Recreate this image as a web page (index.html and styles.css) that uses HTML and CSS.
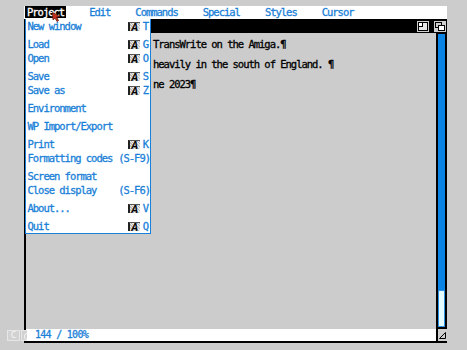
FILE: index.html
```html
<!DOCTYPE html>
<html>
<head>
<meta charset="utf-8">
<link rel="stylesheet" href="styles.css">
</head>
<body>
<div class="screen">
  <div class="menubar">
    <span class="mtitle active">Project</span>
    <span class="mtitle">Edit</span>
    <span class="mtitle">Commands</span>
    <span class="mtitle">Special</span>
    <span class="mtitle">Styles</span>
    <span class="mtitle">Cursor</span>
  </div>
  <div class="window">
    <div class="titlebar">
      <span class="gadget">
        <svg width="12" height="11" viewBox="0 0 12 11"><rect x="0" y="0" width="12" height="11" fill="#cfcfcf"/><rect x="1.5" y="1.5" width="9" height="8" fill="#e8e8e8" stroke="#000"/><rect x="1.5" y="1.5" width="4" height="4" fill="#fff" stroke="#000"/></svg>
      </span>
      <span class="gadget">
        <svg width="12" height="11" viewBox="0 0 12 11"><rect x="0" y="0" width="12" height="11" fill="#cfcfcf"/><rect x="1.5" y="1.5" width="6" height="5" fill="none" stroke="#000"/><rect x="4.5" y="4.5" width="6" height="5" fill="#fff" stroke="#000"/></svg>
      </span>
    </div>
    <div class="body">
      <div class="doc">
        <p>TransWrite on the Amiga.¶</p>
        <p>heavily in the south of England. ¶</p>
        <p>ne 2023¶</p>
      </div>
      <div class="scroll">
        <div class="track"></div>
        <div class="knob"></div>
      </div>
    </div>
    <div class="status">
      <div class="info">144 / 100%</div>
      <div class="sizer">
        <svg width="9" height="10" viewBox="0 0 9 10"><path d="M1.5 8.5 L7.5 2.5 L7.5 8.5 Z" fill="none" stroke="#000"/></svg>
      </div>
    </div>
  </div>
  <div class="cbox c1">C</div>
  <div class="cbox c2"><span class="arc"></span></div>
  <div class="menu">
    <div class="group">
      <div class="item"><span class="label">New window</span><span class="key ak"><span class="akey">A</span>T</span></div>
    </div>
    <div class="group">
      <div class="item"><span class="label">Load</span><span class="key ak"><span class="akey">A</span>G</span></div>
      <div class="item"><span class="label">Open</span><span class="key ak"><span class="akey">A</span>O</span></div>
    </div>
    <div class="group">
      <div class="item"><span class="label">Save</span><span class="key ak"><span class="akey">A</span>S</span></div>
      <div class="item"><span class="label">Save as</span><span class="key ak"><span class="akey">A</span>Z</span></div>
    </div>
    <div class="group">
      <div class="item"><span class="label">Environment</span></div>
    </div>
    <div class="group">
      <div class="item"><span class="label">WP Import/Export</span></div>
    </div>
    <div class="group">
      <div class="item"><span class="label">Print</span><span class="key ak"><span class="akey">A</span>K</span></div>
      <div class="item"><span class="label">Formatting codes</span><span class="key">(S-F9)</span></div>
    </div>
    <div class="group">
      <div class="item"><span class="label">Screen format</span></div>
      <div class="item"><span class="label">Close display</span><span class="key">(S-F6)</span></div>
    </div>
    <div class="group">
      <div class="item"><span class="label">About...</span><span class="key ak"><span class="akey">A</span>V</span></div>
    </div>
    <div class="group">
      <div class="item"><span class="label">Quit</span><span class="key ak"><span class="akey">A</span>Q</span></div>
    </div>
  </div>
  <svg class="pointer" width="9" height="10" viewBox="0 0 9 10"><path d="M0.5 0.5 L7.5 4.5 L4.5 5 L6.5 8.5 L5 9.5 L3 6 L1 8 Z" fill="#c8301c" stroke="#6a1a10" stroke-width="0.8"/></svg>
</div>
</body>
</html>
```
FILE: styles.css
```css
html, body {
  margin: 0;
  padding: 0;
  background: #cccccc;
}
.screen {
  position: relative;
  width: 467px;
  height: 350px;
  overflow: hidden;
  padding-top: 6px;
  box-sizing: border-box;
  font-family: "DejaVu Sans Mono", monospace;
  font-weight: normal;
  -webkit-text-stroke: 0.3px currentColor;
  font-size: 10.5px;
  letter-spacing: -1.02px;
}
.menubar {
  margin-left: 24px;
  width: 423px;
  height: 13px;
  background: #ffffff;
  display: flex;
  line-height: 13px;
  color: #1a7fd8;
}
.mtitle {
  padding: 0 2px;
  margin-right: 21px;
  white-space: pre;
}
.mtitle.active {
  margin-left: 1px;
  background: #000;
  color: #fff;
  height: 12px;
}
.window {
  margin-left: 24px;
  width: 423px;
  height: 324px;
  box-sizing: border-box;
  border-left: 2px solid #000;
  border-bottom: 2px solid #000;
  display: flex;
  flex-direction: column;
  background: #cccccc;
}
.titlebar {
  height: 14px;
  background: #000;
  display: flex;
  justify-content: flex-end;
  align-items: flex-start;
  padding-top: 2px;
  box-sizing: border-box;
  padding-right: 1px;
  gap: 5px;
}
.gadget {
  display: block;
  width: 12px;
  height: 11px;
}
.gadget svg, .sizer svg {
  display: block;
}
.body {
  flex: 1;
  display: flex;
  min-height: 0;
}
.doc {
  flex: 1;
  padding-top: 1px;
  padding-left: 127px;
  color: #000;
  overflow: hidden;
}
.doc p {
  margin: 0;
  line-height: 20px;
  white-space: pre;
}
.scroll {
  width: 11px;
  box-sizing: border-box;
  border-left: 2px solid #000;
  border-right: 2px solid #000;
  border-bottom: 2px solid #000;
  border-top: 1px solid #000;
  display: flex;
  flex-direction: column;
}
.track {
  flex: 1;
  background: #0a84e4;
}
.knob {
  height: 37px;
  box-sizing: border-box;
  border: 1px solid #2c92e6;
  background: #e4fbff;
}
.status {
  height: 12px;
  display: flex;
}
.info {
  flex: 1;
  background: #fff;
  color: #1a7fd8;
  font-size: 10px;
  letter-spacing: -0.72px;
  line-height: 12px;
  padding-left: 9px;
  white-space: pre;
}
.sizer {
  width: 11px;
  box-sizing: border-box;
  border-left: 2px solid #000;
  background: #cfcfcf;
  padding-top: 1px;
}
.cbox {
  position: absolute;
  top: 330px;
  height: 11px;
  box-sizing: border-box;
  border: 1px solid #e6e6e6;
  background: #d2d2d2;
  color: #f6f6f6;
  font-weight: normal;
  -webkit-text-stroke: 0;
  font-size: 9px;
  line-height: 9px;
  letter-spacing: 0;
  text-align: center;
  overflow: hidden;
}
.c1 {
  left: 7px;
  width: 13px;
}
.c2 {
  left: 21px;
  width: 6px;
  border-right: none;
  padding: 2px 0 0 2px;
}
.arc {
  display: block;
  width: 6px;
  height: 5px;
  border: 1px solid #f2f2f2;
  border-radius: 3px;
}
.menu {
  position: absolute;
  left: 25px;
  top: 19px;
  width: 126px;
  box-sizing: border-box;
  background: #fff;
  border: 1px solid #1a7fd8;
  border-top: none;
  padding-left: 1.5px;
  padding-right: 0;
  color: #1a7fd8;
}
.group + .group {
  margin-top: 4px;
}
.item {
  height: 14px;
  line-height: 14px;
  display: flex;
  align-items: center;
  justify-content: space-between;
  white-space: pre;
}
.key {
  display: flex;
  align-items: center;
}
.key.ak {
  margin-right: 2px;
}
.akey {
  display: inline-block;
  width: 12px;
  height: 9px;
  margin-right: 3px;
  box-sizing: border-box;
  border-left: 2px solid #222;
  border-top: 1px solid #555;
  background: repeating-linear-gradient(45deg, #bdbdbd 0 1px, #e9e9e9 1px 2px);
  color: #000;
  -webkit-text-stroke: 0;
  font-family: "Liberation Sans", sans-serif;
  font-style: italic;
  font-weight: bold;
  font-size: 10px;
  line-height: 9px;
  letter-spacing: 0;
  text-align: center;
}
.pointer {
  position: absolute;
  left: 52px;
  top: 12px;
}
```
